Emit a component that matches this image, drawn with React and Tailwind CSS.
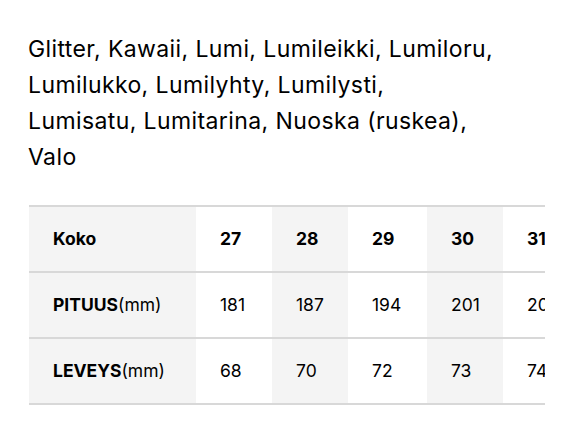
export default function App() {
  const cols = [
    { k: "27", p: "181", l: "68", w: "w-[76px]" },
    { k: "28", p: "187", l: "70", w: "w-[76px]" },
    { k: "29", p: "194", l: "72", w: "w-[79px]" },
    { k: "30", p: "201", l: "73", w: "w-[76px]" },
    { k: "31", p: "208", l: "74", w: "w-[76px]" },
  ];
  const font = { fontFamily: "Inter, 'Liberation Sans', sans-serif" };
  const bg = (i) => (i % 2 === 1 ? "bg-[#f4f4f4]" : "bg-white");
  return (
    <div className="w-[575px] h-[441px] bg-white text-black overflow-hidden" style={font}>
      <p className="pl-[28px] pr-[20px] pt-[31px] text-[23px] leading-[36px] tracking-[0.4px] whitespace-nowrap">
        Glitter, Kawaii, Lumi, Lumileikki, Lumiloru,
        <br />
        Lumilukko, Lumilyhty, Lumilysti,
        <br />
        Lumisatu, Lumitarina, Nuoska (ruskea),
        <br />
        Valo
      </p>
      <div className="ml-[29px] mt-[30px] w-[516px] overflow-hidden">
        <table className="table-fixed w-[550px] border-collapse text-[17.5px] whitespace-nowrap border-t-2 border-[#d8d8d8]">
          <colgroup>
            <col className="w-[167px]" />
            {cols.map((c) => (
              <col key={c.k} className={c.w} />
            ))}
          </colgroup>
          <tbody>
            <tr className="h-[66px] border-b-2 border-[#d8d8d8]">
              <th className="bg-[#f4f4f4] text-left pl-[24px] font-bold">Koko</th>
              {cols.map((c, i) => (
                <th key={c.k} className={`text-left pl-[24px] font-bold ${bg(i)}`}>{c.k}</th>
              ))}
            </tr>
            <tr className="h-[66px] border-b-2 border-[#d8d8d8]">
              <td className="bg-[#f4f4f4] text-left pl-[24px]"><span className="font-bold">PITUUS</span>(mm)</td>
              {cols.map((c, i) => (
                <td key={c.k} className={`text-left pl-[24px] ${bg(i)}`}>{c.p}</td>
              ))}
            </tr>
            <tr className="h-[66px] border-b-2 border-[#d8d8d8]">
              <td className="bg-[#f4f4f4] text-left pl-[24px]"><span className="font-bold">LEVEYS</span>(mm)</td>
              {cols.map((c, i) => (
                <td key={c.k} className={`text-left pl-[24px] ${bg(i)}`}>{c.l}</td>
              ))}
            </tr>
          </tbody>
        </table>
      </div>
    </div>
  );
}
